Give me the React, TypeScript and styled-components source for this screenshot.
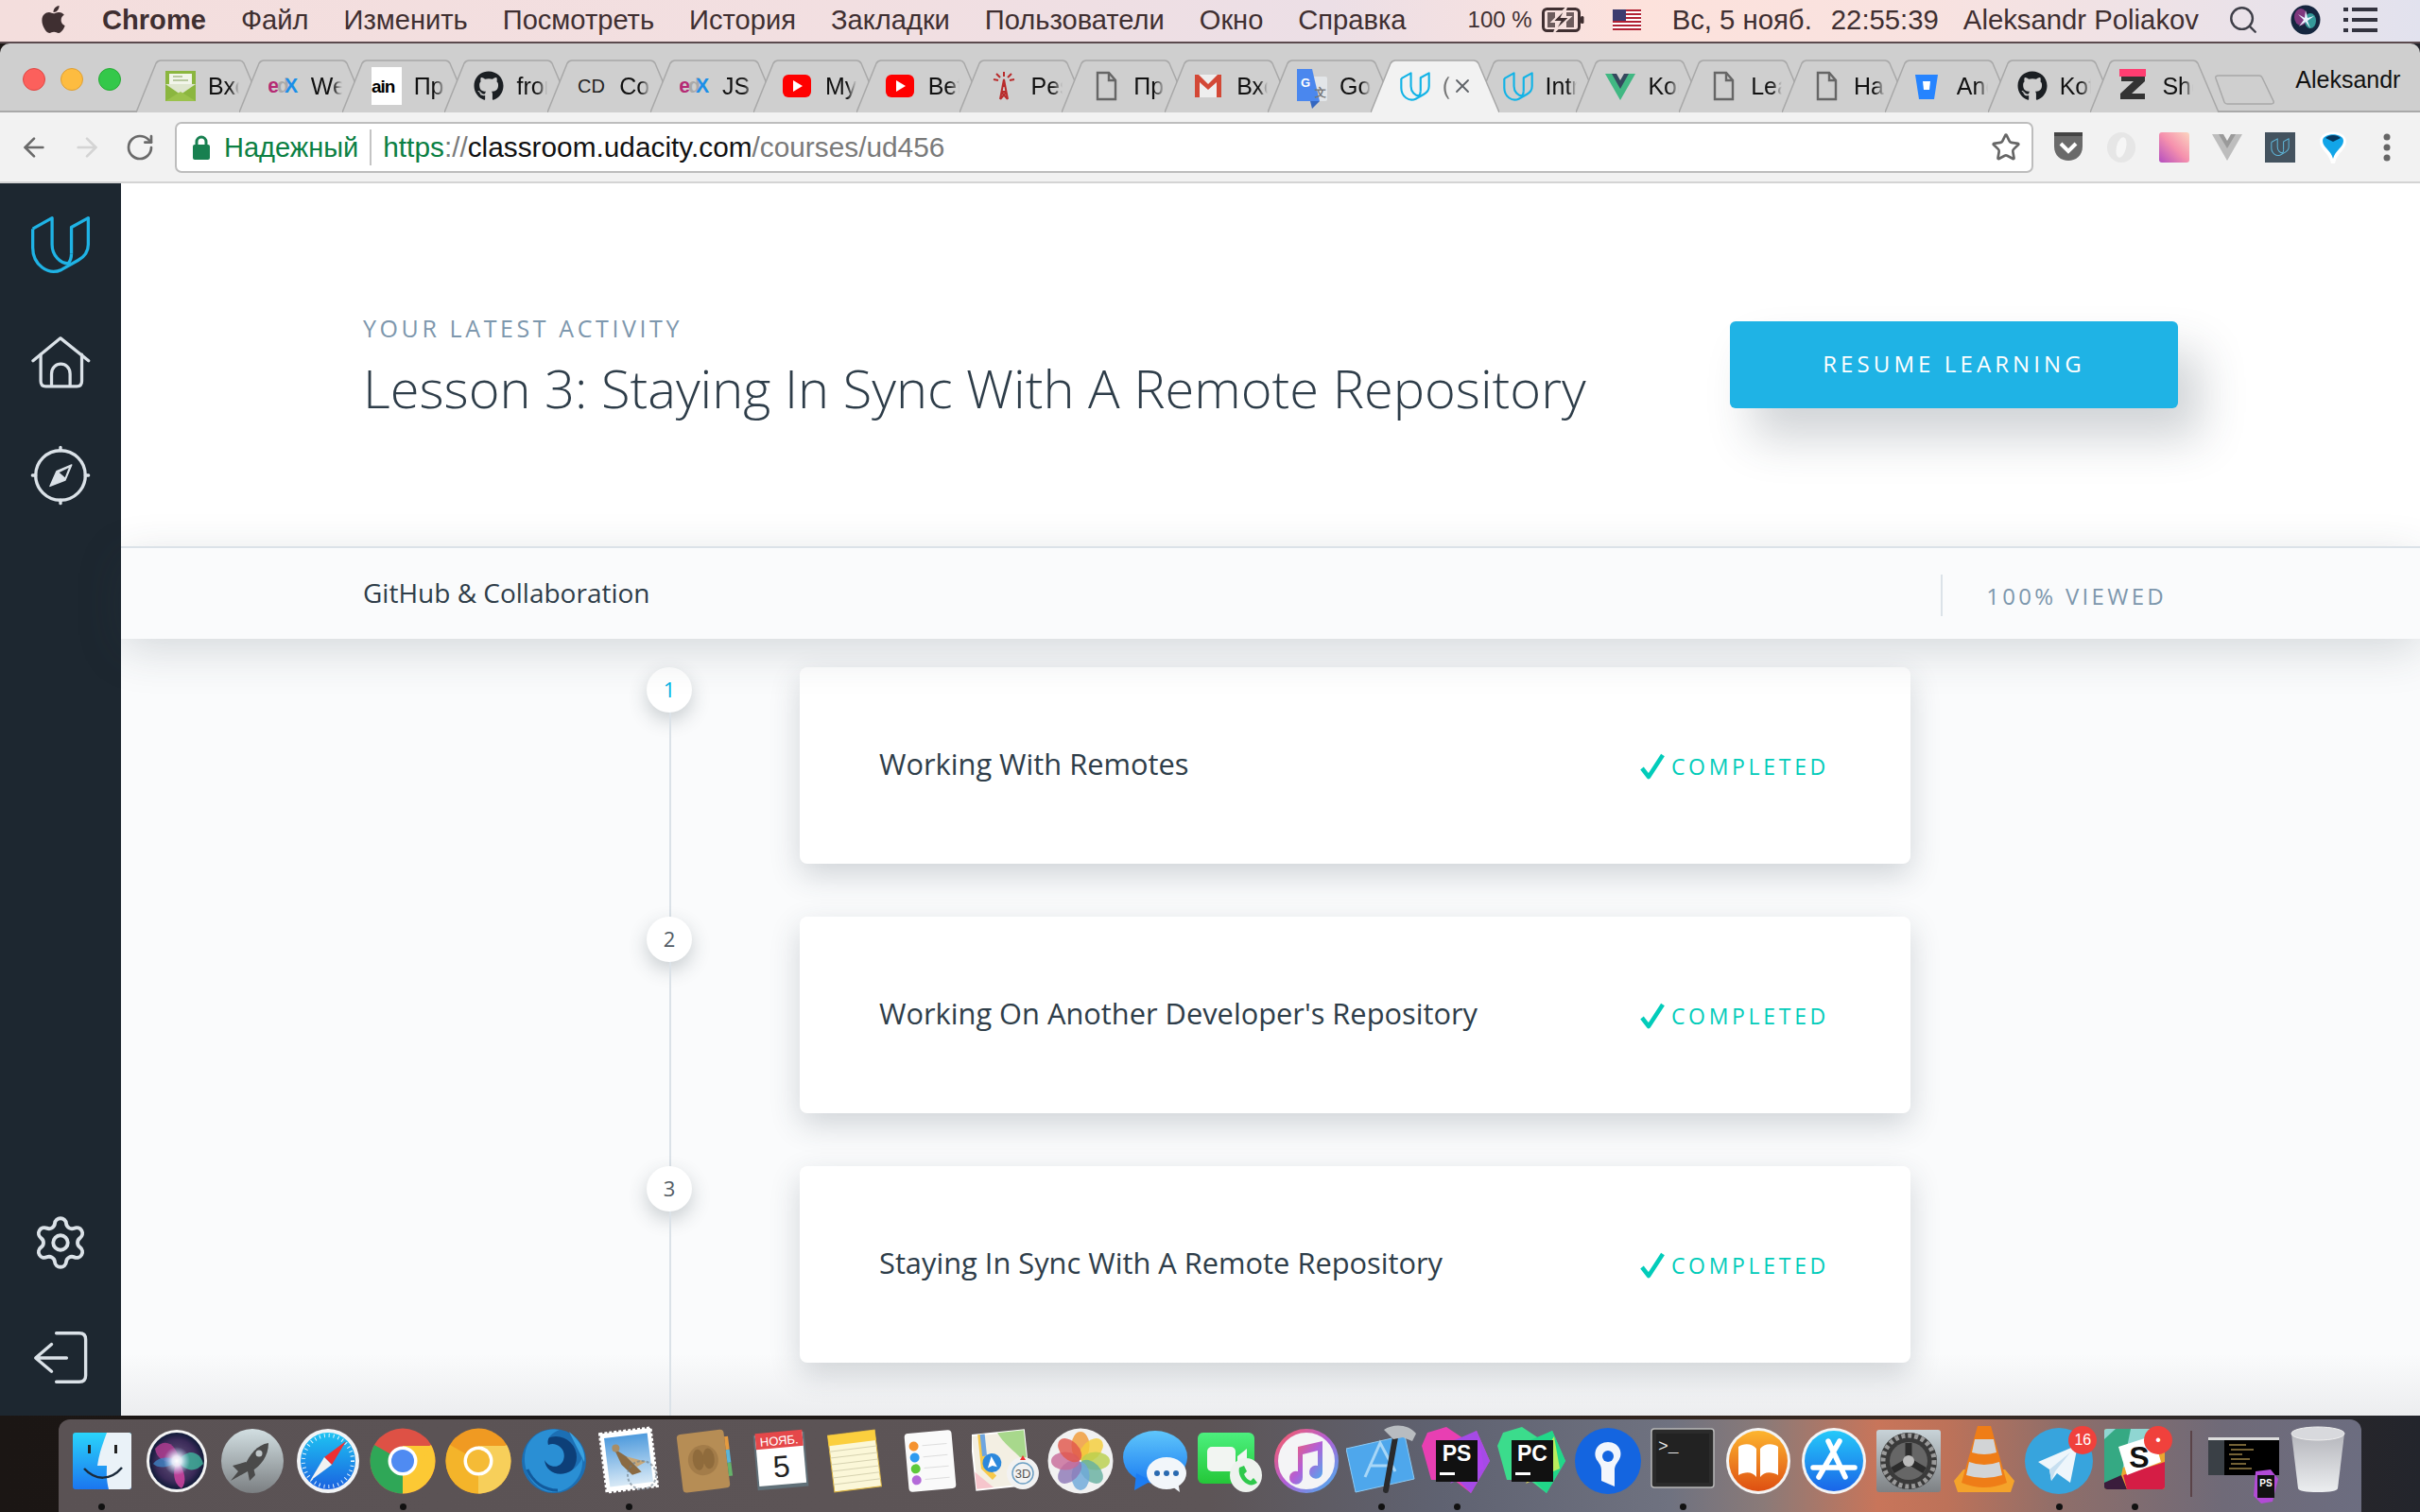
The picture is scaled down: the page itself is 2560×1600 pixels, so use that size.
import React from 'react';
import styled, { createGlobalStyle } from 'styled-components';
import { FaApple, FaGithub } from 'react-icons/fa';
import { Search, Settings, X, Star, ArrowLeft, ArrowRight, RotateCw } from 'lucide-react';

const GlobalStyle = createGlobalStyle`
	html, body {
		margin: 0;
		padding: 0;
		background: #1a1513;
	}
	* {
		box-sizing: border-box;
	}
`;

const SANS = `"Liberation Sans", Arial, sans-serif`;
const OPEN = `"Open Sans", "Noto Sans", sans-serif`;

const Page = styled.div`
	width: 2560px;
	height: 1600px;
	overflow: hidden;
	display: flex;
	flex-direction: column;
	font-family: ${SANS};
	background: linear-gradient(90deg, #1b1614 0%, #211a17 50%, #3a2a22 80%, #23252c 100%);
`;

/* mac menu bar */
const MenuBar = styled.div`
	height: 46px;
	flex: none;
	display: flex;
	align-items: center;
	padding: 0 45px 2px 40px;
	border-bottom: 2px solid #5b4a4e;
	background: linear-gradient(90deg, #f4dedd 0%, #f2dfe1 35%, #ecdfe6 55%, #fde2dc 68%, #f8e2e0 80%, #e2e2ee 100%);
	color: #3f2f31;
	font-size: 29.1px;
`;

const AppleMark = styled.span`
	display: flex;
	width: 68px;
	margin-top: -2px;
`;

const MenuItems = styled.div`
	display: flex;
	gap: 37px;
	flex: 1;
`;

const MenuItem = styled.span<{ $bold?: boolean }>`
	font-weight: ${(p) => (p.$bold ? 700 : 400)};
	white-space: nowrap;
`;

const StatusArea = styled.div`
	display: flex;
	align-items: center;
`;

const StatusText = styled.span<{ $gap?: number; $size?: number }>`
	margin-left: ${(p) => p.$gap ?? 0}px;
	font-size: ${(p) => p.$size ?? 29.3}px;
	white-space: nowrap;
`;

const StatusIcon = styled.span<{ $gap: number }>`
	display: flex;
	margin-left: ${(p) => p.$gap}px;
`;

/* browser window */
const TabStrip = styled.div`
	height: 73px;
	flex: none;
	display: flex;
	align-items: flex-end;
	background: #cfcfcf;
	border-radius: 10px 10px 0 0;
	border-bottom: 2px solid #a9a9a9;
`;

const TrafficLights = styled.div`
	width: 144px;
	flex: none;
	align-self: flex-start;
	display: flex;
	gap: 16px;
	padding: 26px 0 0 24px;
`;

const Light = styled.span<{ $color: string; $edge: string }>`
	width: 24px;
	height: 24px;
	border-radius: 50%;
	background: ${(p) => p.$color};
	border: 1px solid ${(p) => p.$edge};
`;

const Tab = styled.div<{ $active?: boolean }>`
	position: relative;
	width: 136px;
	height: 56px;
	flex: none;
	display: flex;
	align-items: center;
	gap: 13px;
	padding-left: 31px;
	margin-right: -27.2px;
	margin-bottom: -2px;
	z-index: ${(p) => (p.$active ? 2 : 1)};
	font-size: 25px;
	color: #111;
`;

const TabShape = styled.svg`
	position: absolute;
	inset: 0;
`;

const TabIcon = styled.span`
	position: relative;
	display: flex;
	flex: none;
	width: 32px;
	height: 32px;
`;

const TabText = styled.span<{ $active?: boolean }>`
	position: relative;
	width: ${(p) => (p.$active ? 8 : 33)}px;
	overflow: hidden;
	white-space: nowrap;
	color: ${(p) => (p.$active ? '#777' : '#111')};
	-webkit-mask-image: linear-gradient(90deg, #000 70%, transparent 100%);
	mask-image: linear-gradient(90deg, #000 70%, transparent 100%);
`;

const TabClose = styled.span`
	position: relative;
	display: flex;
	margin-left: -12px;
	color: #5f6368;
`;

const NewTab = styled.svg`
	align-self: flex-start;
	margin: 33px 0 0 22px;
	flex: none;
`;

const Profile = styled.span`
	align-self: flex-start;
	margin: 24px 0 0 22px;
	font-size: 25px;
	color: #111;
`;

const Toolbar = styled.div`
	height: 75px;
	flex: none;
	display: flex;
	align-items: center;
	padding: 1px 0 0 20px;
	background: #f2f2f2;
	border-bottom: 2px solid #d4d4d4;
`;

const NavButton = styled.span<{ $width: number }>`
	display: flex;
	width: ${(p) => p.$width}px;
	flex: none;
`;

const Omnibox = styled.div`
	width: 1966px;
	height: 54px;
	flex: none;
	display: flex;
	align-items: center;
	padding: 0 11px 0 16px;
	background: #fff;
	border: 2px solid #bdbdbd;
	border-radius: 7px;
	font-size: 29.8px;
`;

const Secure = styled.span`
	margin-left: 14px;
	padding-right: 12px;
	font-size: 29px;
	color: #0b8043;
	border-right: 2px solid #c4c4c4;
	line-height: 38px;
`;

const Url = styled.span`
	flex: 1;
	margin-left: 12px;
	color: #7a7a7a;
	white-space: nowrap;
`;

const UrlScheme = styled.span`
	color: #0b8043;
`;

const UrlHost = styled.span`
	color: #111;
`;

const Extensions = styled.div`
	display: flex;
	align-items: center;
	margin-left: 21px;
	gap: 24px;
`;

const ExtensionMenu = styled.span`
	display: flex;
	margin-left: 13px;
`;

/* page */
const Main = styled.div`
	flex: 1;
	min-height: 0;
	display: flex;
`;

const Sidebar = styled.nav`
	width: 128px;
	flex: none;
	display: flex;
	flex-direction: column;
	align-items: center;
	padding: 34px 0 34px;
	background: #1d2730;
`;

const NavIcon = styled.span<{ $gap?: number; $push?: boolean }>`
	display: flex;
	margin-top: ${(p) => (p.$push ? 'auto' : `${p.$gap ?? 0}px`)};
`;

const Content = styled.div`
	flex: 1;
	min-width: 0;
	display: flex;
	flex-direction: column;
	background: #fff;
`;

const Hero = styled.section`
	height: 384px;
	flex: none;
	display: flex;
	align-items: center;
	justify-content: space-between;
	padding: 0 256px;
`;

const HeroText = styled.div`
	padding-top: 4px;
`;

const HeroLabel = styled.div`
	font-family: ${OPEN};
	font-size: 25px;
	letter-spacing: 3.6px;
	color: #7d97ad;
	line-height: 32px;
`;

const HeroTitle = styled.h1`
	margin: 11px 0 0;
	font-family: ${OPEN};
	font-size: 56px;
	font-weight: 300;
	line-height: 72px;
	color: #2e3d49;
`;

const ResumeButton = styled.button`
	width: 474px;
	height: 92px;
	padding: 0 0 3px;
	border: none;
	border-radius: 6px;
	background: #1fb3e5;
	color: #fff;
	font-family: ${OPEN};
	font-size: 24px;
	font-weight: 500;
	letter-spacing: 4.1px;
	box-shadow: 24px 32px 48px rgba(46, 61, 73, 0.22);
`;

const ProgressBar = styled.div`
	position: relative;
	z-index: 1;
	height: 98px;
	flex: none;
	display: flex;
	align-items: center;
	justify-content: space-between;
	padding: 0 268px 0 256px;
	background: #fafbfc;
	border-top: 2px solid #dbe2e8;
	box-shadow: 0 12px 48px rgba(46, 61, 73, 0.18);
`;

const CourseName = styled.span`
	margin-top: -2px;
	font-family: ${OPEN};
	font-size: 28px;
	color: #2e3d49;
`;

const Viewed = styled.span`
	display: flex;
	align-items: center;
	height: 44px;
	margin-top: 4px;
	padding-left: 46px;
	border-left: 2px solid #dbe2e8;
	font-family: ${OPEN};
	font-size: 24px;
	font-weight: 500;
	letter-spacing: 3.3px;
	color: #7d97ad;
`;

const LessonList = styled.div`
	flex: 1;
	min-height: 0;
	overflow: hidden;
	padding: 30px 0 0 556px;
	background: linear-gradient(180deg, #fafbfc 0%, #fafbfc 92%, #ecedef 100%);
`;

const LessonRow = styled.div`
	height: 264px;
	display: flex;
`;

const Timeline = styled.div`
	width: 48px;
	flex: none;
	display: flex;
	flex-direction: column;
	align-items: center;
`;

const StepCircle = styled.div<{ $current?: boolean }>`
	width: 48px;
	height: 48px;
	flex: none;
	display: flex;
	align-items: center;
	justify-content: center;
	padding-bottom: 2px;
	border-radius: 50%;
	background: #fff;
	font-family: ${OPEN};
	font-size: 22px;
	color: ${(p) => (p.$current ? '#02b3e4' : '#525c65')};
	box-shadow: 0 8px 20px rgba(46, 61, 73, 0.24);
`;

const StepLine = styled.div`
	width: 2px;
	flex: 1;
	margin-left: 1px;
	background: #dbe2e8;
`;

const LessonCard = styled.div`
	width: 1175px;
	height: 208px;
	margin-left: 114px;
	display: flex;
	align-items: center;
	justify-content: space-between;
	padding: 0 86px 0 84px;
	background: #fff;
	border-radius: 8px;
	box-shadow: 0 12px 32px rgba(46, 61, 73, 0.2);
`;

const LessonTitle = styled.span`
	margin-top: -4px;
	font-family: ${OPEN};
	font-size: 30.8px;
	color: #2e3d49;
`;

const Completed = styled.span`
	display: flex;
	align-items: center;
	gap: 6px;
	margin-top: 2px;
	font-family: ${OPEN};
	font-size: 23px;
	letter-spacing: 3.7px;
	color: #02ccba;
`;

/* dock */
const DockArea = styled.div`
	height: 102px;
	flex: none;
	padding: 4px 62px 0;
`;

const Dock = styled.div`
	height: 98px;
	display: flex;
	padding-left: 6px;
	border-radius: 12px 12px 0 0;
	background: linear-gradient(
		90deg,
		#5a5254 0%,
		#5d5557 50%,
		#5f6271 60%,
		#6f7280 70%,
		#8a7a78 74%,
		#c8755a 79%,
		#bd7259 82%,
		#8e6e6a 87%,
		#6f6a78 94%,
		#6c6d80 100%
	);
`;

const DockSlot = styled.div<{ $running?: boolean; $width?: number }>`
	position: relative;
	width: ${(p) => p.$width ?? 79.65}px;
	flex: none;
	display: flex;
	justify-content: center;
	padding-top: 9px;

	&::after {
		content: '';
		display: ${(p) => (p.$running ? 'block' : 'none')};
		position: absolute;
		left: 50%;
		bottom: 2px;
		width: 7px;
		height: 7px;
		margin-left: -3.5px;
		border-radius: 50%;
		background: #111;
	}
`;

const DockDivider = styled.div`
	width: 2px;
	height: 70px;
	flex: none;
	margin: 12px 15px 0 19px;
	background: #5a4348;
`;

const Badge = styled.span`
	position: absolute;
	top: 7px;
	right: 0;
	width: 30px;
	height: 30px;
	display: flex;
	align-items: center;
	justify-content: center;
	border-radius: 50%;
	background: #f0413c;
	color: #fff;
	font-size: 16px;
`;

/* shared drawings */
const UdacityMark = ({ size, color, width = 10 }: { size: number; color: string; width?: number }) => (
	<svg width={size} height={size} viewBox="92 112 194 194" fill="none" stroke={color} strokeWidth={width} strokeLinejoin="round">
		<path d="M100 155L162 120V205C162 240 188 266 215 266" />
		<path d="M224 235V150L278 120V205C278 230 265 245 245 256L192 286C150 306 100 270 100 215V155" />
		<path d="M224 235C224 250 220 260 212 268" />
	</svg>
);

const HomeIcon = () => (
	<svg width="64" height="58" viewBox="92 490 196 172" fill="none" stroke="#dbe2e8" strokeWidth="10" strokeLinecap="round" strokeLinejoin="round">
		<path d="M101 572L190 499L281 572" />
		<path d="M126 552V638Q126 655 142 655H243Q259 655 259 638V552" />
		<path d="M161 652V615C161 572 221 572 221 615V652" />
	</svg>
);

const CompassIcon = () => (
	<svg width="64" height="64" viewBox="95 848 190 190" fill="none" stroke="#dbe2e8" strokeWidth="10" strokeLinecap="round">
		<circle cx="190" cy="943" r="78" />
		<path d="M190 855V865M190 1021V1031M102 943H112M268 943H278" />
		<polygon points="178,930 225,910 205,958 157,977" fill="#dbe2e8" stroke="#dbe2e8" strokeWidth="4" strokeLinejoin="round" />
		<polygon points="186,934 216,919 204,950" fill="#1d2730" stroke="none" />
	</svg>
);

const ExitIcon = () => (
	<svg width="58" height="56" viewBox="105 444 172 166" fill="none" stroke="#dbe2e8" strokeWidth="10" strokeLinecap="round" strokeLinejoin="round">
		<path d="M178 452H250Q270 452 270 472V585Q270 605 250 605H178" />
		<path d="M210 530H115M163 487L113 530L163 572" />
	</svg>
);

const DocIcon = () => (
	<svg width="32" height="32" viewBox="0 0 32 32" fill="none" stroke="#666" strokeWidth="2.4">
		<path d="M7 2H19L26 10V30H7Z" />
		<path d="M19 2V10H26" />
	</svg>
);

const MailFav = () => (
	<svg width="32" height="32" viewBox="0 0 32 32">
		<rect width="32" height="32" fill="#8bb63f" />
		<rect x="4" y="3" width="24" height="13" fill="#f2f5ea" />
		<path d="M8 6H18M8 10H24" stroke="#b9c9a0" strokeWidth="2" />
		<path d="M0 14L16 25L32 14" fill="#dfe6cf" />
		<path d="M0 32L16 22L32 32Z" fill="#9bc24c" />
	</svg>
);

const EdxFav = () => (
	<svg width="36" height="32" viewBox="0 0 36 32" fontFamily={SANS} fontWeight="700" fontSize="24">
		<text x="-1" y="24" fill="#b52a74">e</text>
		<text x="10" y="24" fill="#a9a9a9">d</text>
		<text x="19" y="24" fill="#1b8fe8">X</text>
	</svg>
);

const AinFav = () => (
	<svg width="32" height="40" viewBox="0 0 32 40" fontFamily={SANS} fontWeight="700" fontSize="19" letterSpacing="-1" style={{ marginTop: -4 }}>
		<rect width="32" height="40" fill="#fff" />
		<text x="0" y="27" fill="#000">ain</text>
	</svg>
);

const CdFav = () => (
	<svg width="32" height="32" viewBox="0 0 32 32" fontFamily={SANS} fontSize="20">
		<text x="1" y="23" fill="#222">CD</text>
	</svg>
);

const YoutubeFav = () => (
	<svg width="30" height="32" viewBox="0 0 30 32">
		<rect y="4" width="30" height="24" rx="6" fill="#f00" />
		<path d="M11 10L21 16L11 22Z" fill="#fff" />
	</svg>
);

const TowerFav = () => (
	<svg width="32" height="32" viewBox="0 0 32 32" fill="none" stroke="#b92b2b" strokeWidth="2">
		<path d="M12 30L16 9L20 30M13 22H19M14 16H18M12 30L19 22M20 30L13 22" />
		<path d="M16 1V6M8 3L12 7M24 3L20 7M5 9L10 10M27 9L22 10" />
	</svg>
);

const GmailFav = () => (
	<svg width="30" height="32" viewBox="0 0 30 32">
		<rect x="1" y="4" width="28" height="24" fill="#eee" />
		<path d="M1 4H5L15 14L25 4H29V28H24V12L15 20L6 12V28H1Z" fill="#d34836" />
	</svg>
);

const TranslateFav = () => (
	<svg width="32" height="44" viewBox="0 0 32 44" fontFamily={SANS} fontWeight="700" style={{ marginTop: -4 }}>
		<rect x="10" y="10" width="22" height="26" rx="2" fill="#e2e5e8" />
		<path d="M0 2H16L24 36H0Z" fill="#4a87ee" />
		<path d="M14 36H24L16 44Z" fill="#3567c0" />
		<text x="4" y="21" fontSize="13" fill="#fff">G</text>
		<text x="19" y="31" fontSize="12" fill="#777">文</text>
	</svg>
);

const VueFav = () => (
	<svg width="32" height="32" viewBox="0 0 32 32">
		<path d="M0 3H8L16 17L24 3H32L16 31Z" fill="#41b883" />
		<path d="M7 3H12L16 10L20 3H25L16 19Z" fill="#35495e" />
	</svg>
);

const BitbucketFav = () => (
	<svg width="26" height="32" viewBox="0 0 26 32">
		<path d="M1 4H25L21 30H5Z" fill="#2684ff" />
		<path d="M9 11H17L16 20H10Z" fill="#fff" />
	</svg>
);

const ZeplinFav = () => (
	<svg width="28" height="32" viewBox="0 0 28 32" style={{ marginTop: -2 }}>
		<rect width="28" height="8" fill="#ff3d71" />
		<path d="M2 8H27V13L13 26H27V32H1V26L15 13H2Z" fill="#333" />
	</svg>
);

const TABS: { icon: React.ReactNode; text: string; active?: boolean }[] = [
	{ icon: <MailFav />, text: 'Вхо' },
	{ icon: <EdxFav />, text: 'Web' },
	{ icon: <AinFav />, text: 'При' },
	{ icon: <FaGithub size={32} color="#1b1f23" />, text: 'from' },
	{ icon: <CdFav />, text: 'Cor' },
	{ icon: <EdxFav />, text: 'JS' },
	{ icon: <YoutubeFav />, text: 'My' },
	{ icon: <YoutubeFav />, text: 'Bet' },
	{ icon: <TowerFav />, text: 'Pes' },
	{ icon: <DocIcon />, text: 'При' },
	{ icon: <GmailFav />, text: 'Вхо' },
	{ icon: <TranslateFav />, text: 'Goo' },
	{ icon: <UdacityMark size={34} color="#12b3e6" width={13} />, text: '(', active: true },
	{ icon: <UdacityMark size={34} color="#12b3e6" width={13} />, text: 'Intr' },
	{ icon: <VueFav />, text: 'Kor' },
	{ icon: <DocIcon />, text: 'Lea' },
	{ icon: <DocIcon />, text: 'Ha' },
	{ icon: <BitbucketFav />, text: 'And' },
	{ icon: <FaGithub size={32} color="#1b1f23" />, text: 'Kot' },
	{ icon: <ZeplinFav />, text: 'Sho' },
];

const TabOutline = ({ active }: { active?: boolean }) => (
	<TabShape width="136" height="56" viewBox="0 0 136 56">
		<path
			d="M0 56L21 4Q23 1 26 1H109Q112 1 114 4L136 56"
			fill={active ? '#f2f2f2' : '#cfcfcf'}
			stroke="#a8a8a8"
			strokeWidth="1.5"
		/>
	</TabShape>
);

/* menu bar icons */
const BatteryIcon = () => (
	<svg width="46" height="26" viewBox="0 0 46 26">
		<rect x="1.5" y="1.5" width="38" height="23" rx="4" fill="none" stroke="#3f2f31" strokeWidth="3" />
		<rect x="41" y="9" width="3.5" height="8" rx="1.5" fill="#3f2f31" />
		<path d="M6 5H14V21H6ZM26 5H34V21H26Z" fill="#3f2f31" opacity="0.75" />
		<path d="M26 0L11 15H19L13 26L30 10H21Z" fill="#3f2f31" stroke="#f6e0dd" strokeWidth="2" />
	</svg>
);

const FlagIcon = () => (
	<svg width="30" height="22" viewBox="0 0 30 22">
		<rect width="30" height="22" fill="#fff" />
		{[0, 4, 8, 12, 16, 20].map((y) => (
			<rect key={y} y={y} width="30" height="2" fill="#b22234" />
		))}
		<rect width="14" height="12" fill="#3c3b6e" />
	</svg>
);

const SiriSmall = () => (
	<svg width="32" height="32" viewBox="0 0 32 32">
		<circle cx="16" cy="16" r="15.5" fill="#15263f" />
		<ellipse cx="11" cy="13" rx="7" ry="9" fill="#9a3c8f" opacity="0.8" />
		<ellipse cx="21" cy="17" rx="6" ry="8" fill="#3db7b0" opacity="0.8" />
		<path d="M16 6L18 14L25 12L18 17L21 25L16 18L9 23L14 16L8 10L15 14Z" fill="#e9f2ff" />
	</svg>
);

const ListIcon = () => (
	<svg width="36" height="26" viewBox="0 0 36 26" fill="#33333f">
		<rect width="5" height="4" />
		<rect x="9" width="27" height="4" />
		<rect y="11" width="5" height="4" />
		<rect x="9" y="11" width="27" height="4" />
		<rect y="22" width="5" height="4" />
		<rect x="9" y="22" width="27" height="4" />
	</svg>
);

/* extension icons */
const PocketExt = () => (
	<svg width="32" height="34" viewBox="0 0 32 34">
		<path d="M1 3Q1 1 3 1H29Q31 1 31 3V16C31 36 1 36 1 16Z" fill="#6a6a6a" />
		<rect x="1" y="1" width="30" height="4" fill="#444" />
		<path d="M8 13L16 21L24 13" fill="none" stroke="#fff" strokeWidth="4" />
	</svg>
);

const RingExt = () => (
	<svg width="32" height="34" viewBox="0 0 32 34">
		<ellipse cx="16" cy="17" rx="15" ry="16" fill="#e6e6e6" />
		<ellipse cx="16" cy="17" rx="5" ry="11" fill="#f6f6f6" transform="rotate(14 16 17)" />
	</svg>
);

const PinkExt = () => (
	<svg width="32" height="32" viewBox="0 0 32 32">
		<defs>
			<linearGradient id="pinkExt" x1="1" y1="0" x2="0" y2="1">
				<stop offset="0" stopColor="#fcd5c0" />
				<stop offset="0.5" stopColor="#f590ad" />
				<stop offset="1" stopColor="#b44ec0" />
			</linearGradient>
		</defs>
		<rect width="32" height="32" rx="3" fill="url(#pinkExt)" />
	</svg>
);

const VueExt = () => (
	<svg width="32" height="30" viewBox="0 0 32 30">
		<path d="M0 1H8L16 15L24 1H32L16 29Z" fill="#bdbdbd" />
		<path d="M7 1H12L16 8L20 1H25L16 16Z" fill="#9a9a9a" />
	</svg>
);

const UdacityExt = () => (
	<svg width="32" height="32" viewBox="0 0 32 32">
		<rect width="32" height="32" fill="#44535f" />
		<g transform="translate(6 6)">
			<UdacityMark size={20} color="#5fb6d9" width={10} />
		</g>
	</svg>
);

const DropExt = () => (
	<svg width="32" height="36" viewBox="0 0 32 36">
		<path d="M2 12C2 -2 30 -2 30 12C30 20 20 24 18 35H14C12 24 2 20 2 12Z" fill="#fff" />
		<path d="M5 11C5 2 27 2 27 11C27 18 18 21 16 30C14 21 5 18 5 11Z" fill="#12a5e8" />
		<path d="M8 8C12 4 20 4 24 8L16 12Z" fill="#07385f" />
	</svg>
);

const MenuDots = () => (
	<svg width="8" height="30" viewBox="0 0 8 30" fill="#666">
		<circle cx="4" cy="4" r="3.5" />
		<circle cx="4" cy="15" r="3.5" />
		<circle cx="4" cy="26" r="3.5" />
	</svg>
);

/* dock icons */
const FinderIcon = () => (
	<svg width="62" height="70" viewBox="0 0 62 70">
		<defs>
			<linearGradient id="finderBlue" x1="0" y1="0" x2="0" y2="1">
				<stop offset="0" stopColor="#2ad4fb" />
				<stop offset="1" stopColor="#1b76ef" />
			</linearGradient>
		</defs>
		<rect y="5" width="62" height="60" rx="3" fill="url(#finderBlue)" />
		<path d="M36 5H59Q62 5 62 8V62Q62 65 59 65H38C35 52 36 48 36 40H26C28 26 32 16 36 5Z" fill="#eaf2f8" />
		<rect x="16" y="18" width="3" height="9" fill="#222" />
		<rect x="44" y="18" width="3" height="9" fill="#222" />
		<path d="M12 43C24 56 40 56 52 42" fill="none" stroke="#1b2a3a" strokeWidth="2.5" />
	</svg>
);

const SiriIcon = () => (
	<svg width="66" height="70" viewBox="0 0 66 70">
		<defs>
			<radialGradient id="siriBg">
				<stop offset="0" stopColor="#6a5a80" />
				<stop offset="0.75" stopColor="#3a2a58" />
				<stop offset="1" stopColor="#0f1a38" />
			</radialGradient>
			<radialGradient id="siriCore">
				<stop offset="0" stopColor="#fff" />
				<stop offset="0.35" stopColor="#f2f5ff" stopOpacity="0.9" />
				<stop offset="1" stopColor="#b8d8ff" stopOpacity="0" />
			</radialGradient>
		</defs>
		<ellipse cx="33" cy="35" rx="32" ry="33" fill="#f4f4f4" />
		<ellipse cx="33" cy="35" rx="29" ry="30" fill="url(#siriBg)" />
		<path d="M10 22C22 8 34 20 36 36C22 38 12 34 10 22Z" fill="#b43d92" opacity="0.8" />
		<path d="M34 35C46 20 58 26 61 38C52 48 42 46 34 35Z" fill="#3fb59c" opacity="0.8" />
		<path d="M33 35C42 44 44 58 38 64C28 58 29 44 33 35Z" fill="#d845a5" opacity="0.8" />
		<path d="M34 35C26 42 14 44 8 38C14 30 26 30 34 35Z" fill="#3e87c8" opacity="0.75" />
		<ellipse cx="33" cy="35" rx="14" ry="15" fill="url(#siriCore)" />
	</svg>
);

const LaunchpadIcon = () => (
	<svg width="66" height="70" viewBox="0 0 66 70">
		<defs>
			<linearGradient id="launchBg" x1="0" y1="0" x2="0" y2="1">
				<stop offset="0" stopColor="#d2dfe2" />
				<stop offset="1" stopColor="#7b7f82" />
			</linearGradient>
		</defs>
		<ellipse cx="33" cy="35" rx="33" ry="34" fill="url(#launchBg)" />
		<path d="M50 16C38 18 30 28 25 40L32 46C42 40 50 30 50 16Z" fill="#4a4a4a" />
		<path d="M26 36L12 40L18 46L10 56L28 46L30 56L36 50L34 42Z" fill="#4a4a4a" />
		<circle cx="40" cy="27" r="3.5" fill="#bfc6c8" />
	</svg>
);

const SafariIcon = () => (
	<svg width="66" height="70" viewBox="0 0 66 70">
		<defs>
			<linearGradient id="safariBg" x1="0" y1="0" x2="0" y2="1">
				<stop offset="0" stopColor="#1ec3f2" />
				<stop offset="1" stopColor="#1a62e0" />
			</linearGradient>
		</defs>
		<ellipse cx="33" cy="35" rx="33" ry="34" fill="#f2f4f6" />
		<ellipse cx="33" cy="35" rx="29" ry="30" fill="url(#safariBg)" />
		<ellipse cx="33" cy="35" rx="26" ry="27" fill="none" stroke="#e5f3fc" strokeWidth="4" strokeDasharray="1 4" />
		<path d="M52 14L29 31L37 39Z" fill="#ef2f32" />
		<path d="M14 56L37 39L29 31Z" fill="#f2f2f2" />
	</svg>
);

const ChromeLikeIcon = ({ top, left, right, core }: { top: string; left: string; right: string; core: string }) => (
	<svg width="70" height="70" viewBox="0 0 70 70">
		<circle cx="35" cy="35" r="34.5" fill={top} />
		<path d="M35 35L5 18A34.5 34.5 0 0 0 35 69.5Z" fill={left} />
		<path d="M35 69.5L35 35L65 18A34.5 34.5 0 0 1 35 69.5Z" fill={right} />
		<path d="M35 19H65L50 44L35 35Z" fill={right} />
		<circle cx="35" cy="35" r="15.5" fill="#fff" />
		<circle cx="35" cy="35" r="12" fill={core} />
	</svg>
);

const FirefoxIcon = () => (
	<svg width="72" height="72" viewBox="0 0 72 72" style={{ marginTop: -2 }}>
		<circle cx="36" cy="37" r="34" fill="#1c6fb4" />
		<circle cx="38" cy="33" r="22" fill="#0d3f78" />
		<path d="M6 26C10 10 26 1 42 4C32 8 28 14 30 20C38 16 50 24 46 36C42 46 30 44 26 36C28 54 54 58 66 34C68 54 52 71 33 70C14 68 1 46 6 26Z" fill="#2a8fd4" />
		<path d="M52 6C62 14 70 26 68 38L60 22Z" fill="#3aa2e0" />
		<path d="M8 46C14 60 26 68 40 68" fill="none" stroke="#125a9c" strokeWidth="3" />
	</svg>
);

const MailIcon = () => (
	<svg width="64" height="72" viewBox="0 0 64 72" style={{ marginTop: -2 }}>
		<defs>
			<linearGradient id="mailSky" x1="0" y1="0" x2="0" y2="1">
				<stop offset="0" stopColor="#4f9bdd" />
				<stop offset="1" stopColor="#d8e9f6" />
			</linearGradient>
		</defs>
		<g transform="rotate(-7 32 36)">
			<rect x="5" y="5" width="54" height="62" fill="#fff" stroke="#fff" strokeWidth="3" strokeDasharray="3 2" />
			<rect x="9" y="10" width="46" height="52" fill="url(#mailSky)" />
			<path d="M18 22L30 32L44 50L34 52L24 40Z" fill="#8a6a42" />
			<path d="M30 32L50 40L40 44Z" fill="#c8a777" />
			<circle cx="20" cy="22" r="4" fill="#a88d66" />
		</g>
		<circle cx="46" cy="52" r="15" fill="none" stroke="#6b7b88" strokeWidth="2" opacity="0.6" strokeDasharray="3 2" />
	</svg>
);

const ContactsIcon = () => (
	<svg width="62" height="70" viewBox="0 0 62 70">
		<g transform="rotate(-7 31 35)">
			<rect x="5" y="4" width="50" height="62" rx="4" fill="#b68d55" />
			<rect x="55" y="12" width="4" height="14" fill="#e59b3f" />
			<rect x="55" y="26" width="4" height="14" fill="#5bb5d8" />
			<rect x="55" y="40" width="4" height="14" fill="#66b36a" />
			<circle cx="30" cy="34" r="16" fill="#a37c49" />
			<ellipse cx="25" cy="33" rx="6" ry="11" fill="#8f6b3c" />
			<ellipse cx="36" cy="33" rx="6" ry="11" fill="#8f6b3c" />
		</g>
	</svg>
);

const CalendarIcon = () => (
	<svg width="64" height="68" viewBox="0 0 64 68" fontFamily={SANS}>
		<g transform="rotate(-5 32 34)">
			<rect x="6" y="6" width="54" height="58" fill="#607078" />
			<rect x="8" y="6" width="50" height="54" fill="#fff" />
			<rect x="8" y="4" width="50" height="17" fill="#e5484a" />
			<text x="33" y="18" textAnchor="middle" fontSize="13" fill="#fff">НОЯБ.</text>
			<text x="33" y="52" textAnchor="middle" fontSize="32" fill="#222">5</text>
		</g>
	</svg>
);

const NotesIcon = () => (
	<svg width="62" height="70" viewBox="0 0 62 70">
		<g transform="rotate(-7 31 35)">
			<rect x="6" y="5" width="50" height="60" fill="#fbf7d8" stroke="#d9b23f" strokeWidth="1" />
			<rect x="6" y="5" width="50" height="11" fill="#fbcf3e" />
			{[22, 29, 36, 43, 50, 57].map((y) => (
				<path key={y} d="M6 0H56" transform={`translate(0 ${y})`} stroke="#d6d2b0" strokeWidth="1" />
			))}
		</g>
	</svg>
);

const RemindersIcon = () => (
	<svg width="62" height="70" viewBox="0 0 62 70">
		<g transform="rotate(-5 31 35)">
			<rect x="6" y="4" width="50" height="62" rx="4" fill="#fafafa" />
			<circle cx="15" cy="18" r="5" fill="#f5922f" />
			<circle cx="15" cy="30" r="5" fill="#2e9bf0" />
			<circle cx="15" cy="42" r="5" fill="#5ec93a" />
			<circle cx="15" cy="54" r="5" fill="#b46ad9" />
			{[18, 30, 42, 54].map((y) => (
				<path key={y} d={`M24 ${y}H50`} stroke="#dddddd" />
			))}
		</g>
	</svg>
);

const MapsIcon = () => (
	<svg width="72" height="70" viewBox="0 0 72 70" fontFamily={SANS}>
		<g transform="rotate(-6 30 33)">
			<rect x="2" y="5" width="56" height="58" fill="#f3efe3" stroke="#fff" strokeWidth="2" />
			<path d="M30 5H58V44C50 28 38 22 30 5Z" fill="#a8d88c" />
			<path d="M12 5V40L22 52" fill="none" stroke="#f7c94b" strokeWidth="6" />
			<path d="M14 5V28" stroke="#6da5e0" strokeWidth="5" />
			<path d="M2 44L20 62H2Z" fill="#f6c5cc" />
			<circle cx="21" cy="36" r="10" fill="#2b88dc" />
			<path d="M21 29L26 41L21 39L16 41Z" fill="#fff" />
		</g>
		<circle cx="54" cy="48" r="17" fill="#f2f2f2" />
		<circle cx="54" cy="48" r="11" fill="none" stroke="#6ea0c4" strokeWidth="1.5" />
		<path d="M54 29L57 34H51Z" fill="#e33" />
		<text x="54" y="53" textAnchor="middle" fontSize="13" fill="#555">3D</text>
	</svg>
);

const PhotosIcon = () => {
	const petals = ['#f09a37', '#f4cd39', '#b9cf4d', '#67b0a0', '#6ea8d9', '#8d79b7', '#c86b9a', '#e0574c'];
	return (
		<svg width="70" height="70" viewBox="0 0 70 70">
			<circle cx="35" cy="35" r="34.5" fill="#f1f1f1" />
			{petals.map((color, i) => (
				<ellipse key={color} cx="35" cy="19" rx="9.5" ry="15" fill={color} opacity="0.82" transform={`rotate(${i * 45} 35 35)`} />
			))}
		</svg>
	);
};

const MessagesIcon = () => (
	<svg width="70" height="70" viewBox="0 0 70 70">
		<defs>
			<linearGradient id="msgBlue" x1="0" y1="0" x2="0" y2="1">
				<stop offset="0" stopColor="#5fc6fb" />
				<stop offset="1" stopColor="#1c7df2" />
			</linearGradient>
		</defs>
		<ellipse cx="34" cy="31" rx="34" ry="28" fill="url(#msgBlue)" />
		<path d="M14 48L12 66L30 56Z" fill="#1c7df2" />
		<ellipse cx="46" cy="48" rx="21" ry="17" fill="#f2f6fa" />
		<path d="M52 62L60 68L58 56Z" fill="#f2f6fa" />
		<circle cx="36" cy="48" r="3" fill="#2a6ab0" />
		<circle cx="46" cy="48" r="3" fill="#2a6ab0" />
		<circle cx="56" cy="48" r="3" fill="#2a6ab0" />
	</svg>
);

const FacetimeIcon = () => (
	<svg width="70" height="70" viewBox="0 0 70 70">
		<defs>
			<linearGradient id="ftGreen" x1="0" y1="0" x2="0" y2="1">
				<stop offset="0" stopColor="#4cf07e" />
				<stop offset="1" stopColor="#24c738" />
			</linearGradient>
		</defs>
		<rect x="0" y="5" width="60" height="54" rx="6" fill="url(#ftGreen)" />
		<rect x="10" y="20" width="30" height="26" rx="5" fill="#f2f5f2" />
		<path d="M42 30L52 22V44L42 36Z" fill="#f2f5f2" />
		<ellipse cx="51" cy="50" rx="17" ry="18" fill="#eef2ee" />
		<path d="M44 42L49 40L52 46L49 49C51 53 53 55 56 56L59 53L63 58C58 62 53 61 48 56C44 51 43 46 44 42Z" fill="#2fc94c" />
	</svg>
);

const ItunesIcon = () => (
	<svg width="70" height="70" viewBox="0 0 70 70">
		<defs>
			<linearGradient id="itRing" x1="0" y1="0" x2="1" y2="1">
				<stop offset="0" stopColor="#fa5c62" />
				<stop offset="0.5" stopColor="#b25fd8" />
				<stop offset="1" stopColor="#43b5f0" />
			</linearGradient>
		</defs>
		<circle cx="35" cy="35" r="32" fill="#f4f4f6" stroke="url(#itRing)" strokeWidth="4" />
		<path d="M26 20L52 14V46A7 7 0 1 1 47 40V24L31 28V52A7 7 0 1 1 26 46Z" fill="url(#itRing)" />
	</svg>
);

const XcodeIcon = () => (
	<svg width="76" height="74" viewBox="0 0 76 74" style={{ marginTop: -4 }}>
		<path d="M0 26L62 12L72 58L10 72Z" fill="#4ea7ec" stroke="#8ccaf5" strokeWidth="1" />
		<path d="M20 56L36 20L52 50M24 44H50" fill="none" stroke="#a8d7f7" strokeWidth="3" />
		<path d="M42 70L52 14" stroke="#2a2a2c" strokeWidth="6" strokeLinecap="round" />
		<path d="M40 6C50 -1 66 0 74 10L70 18L60 14L50 16Z" fill="#b8bcc0" />
	</svg>
);

const JetbrainsIcon = ({ name, a, b, c }: { name: string; a: string; b: string; c: string }) => (
	<svg width="74" height="72" viewBox="0 0 74 72" fontFamily={SANS} style={{ marginTop: -1 }}>
		<path d="M6 6L26 0L44 12L58 4L72 36L52 70L34 56L10 56L0 20Z" fill={a} />
		<path d="M30 16L58 4L72 36L52 70L34 52Z" fill={b} />
		<path d="M44 36L60 10L66 44L30 60Z" fill={c} opacity="0.7" />
		<rect x="15" y="14" width="44" height="44" fill="#111" />
		<text x="37" y="36" textAnchor="middle" fontSize="23" fontWeight="700" fill="#fff">{name}</text>
		<rect x="19" y="48" width="16" height="3" fill="#fff" />
	</svg>
);

const SourcetreeIcon = () => (
	<svg width="70" height="70" viewBox="0 0 70 70">
		<circle cx="35" cy="35" r="35" fill="#1465e0" />
		<path d="M35 15C47 15 52 27 46 35C44 38 42 40 42 45V62L28 56V45C28 40 26 38 24 35C18 27 23 15 35 15Z" fill="#f2f6fc" />
		<circle cx="35" cy="30" r="6" fill="#1465e0" />
	</svg>
);

const TerminalIcon = () => (
	<svg width="68" height="66" viewBox="0 0 68 66" fontFamily={`"Liberation Mono", monospace`}>
		<rect x="1" y="1" width="66" height="62" rx="3" fill="#2b2b2b" stroke="#b8b8b8" strokeWidth="1.5" />
		<rect x="6" y="6" width="56" height="52" fill="#222" />
		<text x="8" y="25" fontSize="18" fill="#e8e8e8">&gt;_</text>
	</svg>
);

const BooksIcon = () => (
	<svg width="68" height="70" viewBox="0 0 68 70">
		<defs>
			<linearGradient id="bookOrange" x1="0" y1="0" x2="0" y2="1">
				<stop offset="0" stopColor="#fdb52f" />
				<stop offset="1" stopColor="#de4f12" />
			</linearGradient>
		</defs>
		<ellipse cx="34" cy="35" rx="34" ry="35" fill="#f4f4f4" />
		<ellipse cx="34" cy="35" rx="31" ry="32" fill="url(#bookOrange)" />
		<path d="M32 22C28 16 18 16 13 20V50C20 46 28 46 32 52Z" fill="#fff" />
		<path d="M36 22C40 16 50 16 55 20V50C48 46 40 46 36 52Z" fill="#fff" />
	</svg>
);

const AppStoreIcon = () => (
	<svg width="68" height="70" viewBox="0 0 68 70">
		<defs>
			<linearGradient id="storeBlue" x1="0" y1="0" x2="0" y2="1">
				<stop offset="0" stopColor="#25c9f9" />
				<stop offset="1" stopColor="#1a65e8" />
			</linearGradient>
		</defs>
		<ellipse cx="34" cy="35" rx="34" ry="35" fill="#f4f4f4" />
		<ellipse cx="34" cy="35" rx="31" ry="32" fill="url(#storeBlue)" />
		<path d="M28 14L46 52M40 14L18 52M12 42H56" stroke="#fff" strokeWidth="5.5" strokeLinecap="round" fill="none" />
	</svg>
);

const SysPrefsIcon = () => (
	<svg width="68" height="70" viewBox="0 0 68 70">
		<defs>
			<linearGradient id="prefBg" x1="0" y1="0" x2="0" y2="1">
				<stop offset="0" stopColor="#c8d3d8" />
				<stop offset="1" stopColor="#7e8184" />
			</linearGradient>
		</defs>
		<rect y="2" width="68" height="66" rx="3" fill="url(#prefBg)" />
		<circle cx="34" cy="35" r="30" fill="#3a3a3a" />
		<circle cx="34" cy="35" r="27" fill="none" stroke="#9a9a9a" strokeWidth="5" strokeDasharray="4 3" />
		<circle cx="34" cy="35" r="20" fill="#666" />
		<path d="M34 35V16M34 35L17 45M34 35L51 45" stroke="#2c2c2c" strokeWidth="7" />
		<circle cx="34" cy="35" r="6" fill="#bbb" />
	</svg>
);

const VlcIcon = () => (
	<svg width="68" height="74" viewBox="0 0 68 74" style={{ marginTop: -4 }}>
		<path d="M2 60L12 48H56L66 60L62 72H6Z" fill="#f5a32a" />
		<path d="M27 2H41L58 62Q34 72 10 62Z" fill="#ef7d17" />
		<path d="M24 16H44L47 30Q34 34 21 30Z" fill="#d2d4d6" />
		<path d="M18 40Q34 46 50 40L53 54Q34 60 15 54Z" fill="#d2d4d6" />
	</svg>
);

const TelegramIcon = () => (
	<svg width="72" height="70" viewBox="0 0 72 70">
		<ellipse cx="36" cy="35" rx="36" ry="35" fill="#37a4dd" />
		<path d="M14 36L56 18L48 58L34 48L28 56L26 44Z" fill="#eef6fb" />
		<path d="M26 44L48 26L32 46L28 56Z" fill="#c6dff0" />
	</svg>
);

const SlackIcon = () => (
	<svg width="64" height="66" viewBox="0 0 64 66" fontFamily={SANS}>
		<rect y="1" width="64" height="64" rx="3" fill="#eaa830" />
		<path d="M0 3Q0 1 3 1H50L64 24L0 50Z" fill="#8fd6d2" />
		<path d="M0 12L12 1H28L16 60L0 64Z" fill="#35a983" />
		<path d="M0 58L18 50L24 65H3Q0 65 0 62Z" fill="#3a1c3c" />
		<path d="M20 50L64 36V62Q64 65 61 65H24Z" fill="#d51d45" />
		<path d="M15 20L52 8L60 36L24 50Z" fill="#fff" />
		<text x="37" y="42" textAnchor="middle" fontSize="32" fontWeight="700" fill="#111">S</text>
	</svg>
);

const MinimizedWindow = () => (
	<svg width="76" height="72" viewBox="0 0 76 72" fontFamily={SANS} style={{ marginTop: 10 }}>
		<rect y="0" width="75" height="40" fill="#000" />
		<rect y="0" width="75" height="3" fill="#ddd" />
		<rect x="0" y="3" width="17" height="37" fill="#3a4046" />
		<path d="M22 8H40M24 13H48M22 18H36M24 23H44M24 28H40M22 33H46" stroke="#e9c46a" strokeWidth="1" />
		<path d="M50 36L66 34L74 44L68 68L56 70L48 62Z" fill="#b24bd6" />
		<rect x="52" y="40" width="18" height="24" fill="#111" />
		<text x="61" y="52" textAnchor="middle" fontSize="10" fontWeight="700" fill="#fff">PS</text>
	</svg>
);

const TrashIcon = () => (
	<svg width="58" height="72" viewBox="0 0 58 72" style={{ marginTop: -2 }}>
		<defs>
			<linearGradient id="trashGlass" x1="0" y1="0" x2="0" y2="1">
				<stop offset="0" stopColor="#b5b6bc" />
				<stop offset="1" stopColor="#eceef0" />
			</linearGradient>
		</defs>
		<path d="M1 8L8 66Q9 70 29 70Q49 70 50 66L57 8Z" fill="url(#trashGlass)" />
		<ellipse cx="29" cy="8" rx="28" ry="7" fill="#d8d9dd" stroke="#eeeeee" />
	</svg>
);

const DOCK_APPS: { node: React.ReactNode; running?: boolean; badge?: React.ReactNode }[] = [
	{ node: <FinderIcon />, running: true },
	{ node: <SiriIcon /> },
	{ node: <LaunchpadIcon /> },
	{ node: <SafariIcon /> },
	{ node: <ChromeLikeIcon top="#de5145" left="#2fa757" right="#fcc934" core="#4f8bf2" />, running: true },
	{ node: <ChromeLikeIcon top="#f09a22" left="#f4b42a" right="#f7cf5a" core="#f5bb36" /> },
	{ node: <FirefoxIcon /> },
	{ node: <MailIcon />, running: true },
	{ node: <ContactsIcon /> },
	{ node: <CalendarIcon /> },
	{ node: <NotesIcon /> },
	{ node: <RemindersIcon /> },
	{ node: <MapsIcon /> },
	{ node: <PhotosIcon /> },
	{ node: <MessagesIcon /> },
	{ node: <FacetimeIcon /> },
	{ node: <ItunesIcon /> },
	{ node: <XcodeIcon />, running: true },
	{ node: <JetbrainsIcon name="PS" a="#e83fb2" b="#a54be6" c="#b345f1" />, running: true },
	{ node: <JetbrainsIcon name="PC" a="#3bdc8c" b="#21d789" c="#fcf84a" /> },
	{ node: <SourcetreeIcon /> },
	{ node: <TerminalIcon />, running: true },
	{ node: <BooksIcon /> },
	{ node: <AppStoreIcon /> },
	{ node: <SysPrefsIcon /> },
	{ node: <VlcIcon /> },
	{ node: <TelegramIcon />, running: true, badge: '16' },
	{ node: <SlackIcon />, running: true, badge: '•' },
];

const LESSONS = ['Working With Remotes', "Working On Another Developer's Repository", 'Staying In Sync With A Remote Repository'];

const MENU_ITEMS = ['Файл', 'Изменить', 'Посмотреть', 'История', 'Закладки', 'Пользователи', 'Окно', 'Справка'];

const CheckMark = () => (
	<svg width="28" height="28" viewBox="0 0 28 28" fill="none" stroke="#02ccba" strokeWidth="4.5" strokeLinejoin="round">
		<path d="M3 16L10 25L25 2" />
	</svg>
);

const App: React.FC = () => {
	return (
		<Page>
			<GlobalStyle />
			<MenuBar>
				<AppleMark>
					<FaApple size={33} color="#3f2f31" />
				</AppleMark>
				<MenuItems>
					<MenuItem $bold>Chrome</MenuItem>
					{MENU_ITEMS.map((item) => (
						<MenuItem key={item}>{item}</MenuItem>
					))}
				</MenuItems>
				<StatusArea>
					<StatusText $size={24}>100 %</StatusText>
					<StatusIcon $gap={10}>
						<BatteryIcon />
					</StatusIcon>
					<StatusIcon $gap={29}>
						<FlagIcon />
					</StatusIcon>
					<StatusText $gap={33}>Вс, 5 нояб.</StatusText>
					<StatusText $gap={20}>22:55:39</StatusText>
					<StatusText $gap={26}>Aleksandr Poliakov</StatusText>
					<StatusIcon $gap={30}>
						<Search size={34} color="#3f3f48" strokeWidth={1.7} />
					</StatusIcon>
					<StatusIcon $gap={33}>
						<SiriSmall />
					</StatusIcon>
					<StatusIcon $gap={24}>
						<ListIcon />
					</StatusIcon>
				</StatusArea>
			</MenuBar>

			<TabStrip>
				<TrafficLights>
					<Light $color="#fc605c" $edge="#df4744" />
					<Light $color="#fdbc40" $edge="#de9f34" />
					<Light $color="#34c84a" $edge="#27aa35" />
				</TrafficLights>
				{TABS.map((tab, index) => (
					<Tab key={index} $active={tab.active}>
						<TabOutline active={tab.active} />
						<TabIcon>{tab.icon}</TabIcon>
						<TabText $active={tab.active}>{tab.text}</TabText>
						{tab.active && (
							<TabClose>
								<X size={24} strokeWidth={1.8} />
							</TabClose>
						)}
					</Tab>
				))}
				<NewTab width="64" height="32" viewBox="0 0 64 32">
					<path d="M2 4Q1 1 5 1H48Q50 1 51 3L63 28Q64 31 60 31H14Q12 31 11 29Z" fill="#cfcfcf" stroke="#a8a8a8" strokeWidth="1.5" />
				</NewTab>
				<Profile>Aleksandr</Profile>
			</TabStrip>

			<Toolbar>
				<NavButton $width={56}>
					<ArrowLeft size={32} color="#6a6a6a" strokeWidth={2} />
				</NavButton>
				<NavButton $width={56}>
					<ArrowRight size={32} color="#d4d4d4" strokeWidth={2} />
				</NavButton>
				<NavButton $width={53}>
					<RotateCw size={32} color="#6a6a6a" strokeWidth={2} />
				</NavButton>
				<Omnibox>
					<svg width="20" height="28" viewBox="0 0 20 28">
						<path d="M5 12V8A5 5 0 0 1 15 8V12" fill="none" stroke="#188050" strokeWidth="3" />
						<rect x="1" y="11" width="18" height="16" rx="2" fill="#188050" />
					</svg>
					<Secure>Надежный</Secure>
					<Url>
						<UrlScheme>https</UrlScheme>://<UrlHost>classroom.udacity.com</UrlHost>/courses/ud456
					</Url>
					<Star size={32} color="#666" strokeWidth={2} />
				</Omnibox>
				<Extensions>
					<PocketExt />
					<RingExt />
					<PinkExt />
					<VueExt />
					<UdacityExt />
					<DropExt />
					<ExtensionMenu>
						<MenuDots />
					</ExtensionMenu>
				</Extensions>
			</Toolbar>

			<Main>
				<Sidebar>
					<UdacityMark size={64} color="#1fb3e5" />
					<NavIcon $gap={62}>
						<HomeIcon />
					</NavIcon>
					<NavIcon $gap={59}>
						<CompassIcon />
					</NavIcon>
					<NavIcon $push>
						<Settings size={62} color="#dbe2e8" strokeWidth={1.5} />
					</NavIcon>
					<NavIcon $gap={62}>
						<ExitIcon />
					</NavIcon>
				</Sidebar>
				<Content>
					<Hero>
						<HeroText>
							<HeroLabel>YOUR LATEST ACTIVITY</HeroLabel>
							<HeroTitle>Lesson 3: Staying In Sync With A Remote Repository</HeroTitle>
						</HeroText>
						<ResumeButton>RESUME LEARNING</ResumeButton>
					</Hero>
					<ProgressBar>
						<CourseName>GitHub &amp; Collaboration</CourseName>
						<Viewed>100% VIEWED</Viewed>
					</ProgressBar>
					<LessonList>
						{LESSONS.map((lesson, index) => (
							<LessonRow key={lesson}>
								<Timeline>
									<StepCircle $current={index === 0}>{index + 1}</StepCircle>
									<StepLine />
								</Timeline>
								<LessonCard>
									<LessonTitle>{lesson}</LessonTitle>
									<Completed>
										<CheckMark />
										COMPLETED
									</Completed>
								</LessonCard>
							</LessonRow>
						))}
					</LessonList>
				</Content>
			</Main>

			<DockArea>
				<Dock>
					{DOCK_APPS.map((app, index) => (
						<DockSlot key={index} $running={app.running}>
							{app.node}
							{app.badge && <Badge>{app.badge}</Badge>}
						</DockSlot>
					))}
					<DockDivider />
					<DockSlot $width={80}>
						<MinimizedWindow />
					</DockSlot>
					<DockSlot $width={76}>
						<TrashIcon />
					</DockSlot>
				</Dock>
			</DockArea>
		</Page>
	);
};

export default App;
